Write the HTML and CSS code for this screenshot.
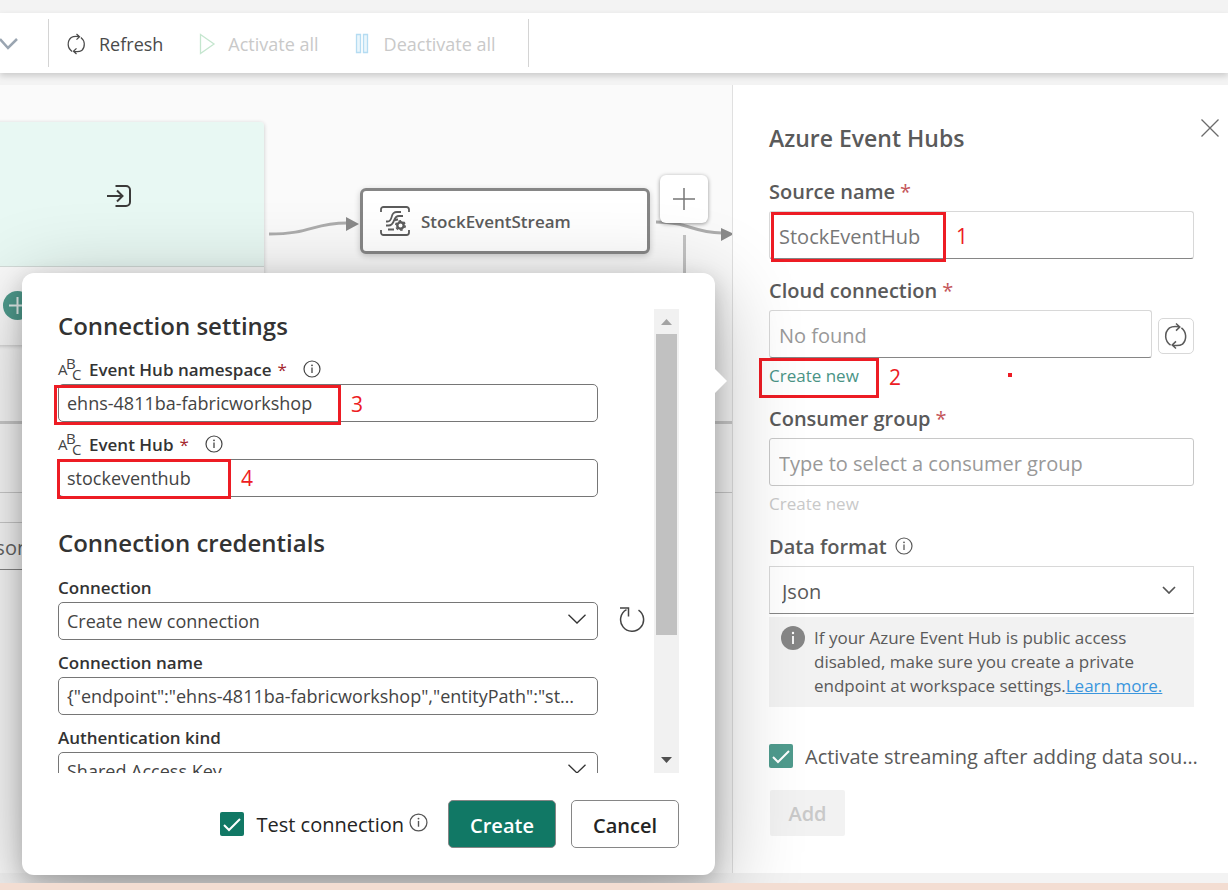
FILE: index.html
```html
<!DOCTYPE html>
<html lang="en">
<head>
<meta charset="utf-8">
<title>Azure Event Hubs</title>
<link rel="stylesheet" href="styles.css">
</head>
<body>
<svg class="defs" aria-hidden="true">
  <symbol id="sync" viewBox="0 0 24 24">
    <g fill="none" stroke="currentColor" stroke-width="1.4">
      <path d="M7 20.5A10 10 0 0 1 6 4.500Q9 2.500 15 3.500M12 0.500L15.500 3.700L12 7"/>
      <path d="M17 4.500A10 10 0 0 1 18 19.500Q15 21.500 9 20.500M12 17L8.500 20.300L12 23.500"/>
    </g>
  </symbol>
  <symbol id="info" viewBox="0 0 18 18">
    <circle cx="9" cy="9" r="8" fill="none" stroke="currentColor" stroke-width="1.2"/>
    <path d="M9 7.500V13" stroke="currentColor" stroke-width="1.3"/>
    <circle cx="9" cy="5.300" r="0.900" fill="currentColor"/>
  </symbol>
  <symbol id="thin-chevron" viewBox="0 0 18 10">
    <path d="M0.500 0.700L9 9L17.500 0.700" fill="none" stroke="currentColor" stroke-width="1.3"/>
  </symbol>
  <symbol id="check" viewBox="0 0 24 24">
    <path d="M4 13L9 18L20 7" fill="none" stroke="#fff" stroke-width="2"/>
  </symbol>
</svg>

<div class="app">
  <header class="toolbar">
    <button class="tool tool-menu" aria-label="More">
      <svg width="18" height="14" viewBox="0 0 18 14"><path d="M0 2L8 11L17 2" fill="none" stroke="#9aa5b1" stroke-width="2.500"/></svg>
    </button>
    <div class="tool-group">
      <button class="tool"><svg width="21" height="24"><use href="#sync"/></svg>Refresh</button>
      <button class="tool" disabled>
        <svg width="17" height="22" viewBox="0 0 17 22"><path d="M1.500 1.500L15 11L1.500 20.500Z" fill="none" stroke="#c5e6cf" stroke-width="1.300"/></svg>Activate all
      </button>
      <button class="tool" disabled>
        <svg width="17" height="22" viewBox="0 0 17 22"><path d="M1.500 1.500h4v18h-4zM8.500 1.500h4v18h-4z" fill="#eaf6fc" stroke="#b5dcf2" stroke-width="1.300"/></svg>Deactivate all
      </button>
    </div>
  </header>

  <main class="workspace">
    <section class="canvas">
      <div class="graph">
        <svg class="edges" width="732" height="336">
          <g fill="none" stroke="#adadad" stroke-width="3">
            <path d="M269 149C312 149 312 138 347 138"/>
            <path d="M656 137C690 137 690 147 722 148"/>
            <path d="M684.500 150V336" stroke="#c2c2c2"/>
          </g>
          <path d="M346 132L359 139L346 146ZM721 143L734 149L721 156Z" fill="#8a8a8a"/>
        </svg>
        <div class="source-node">
          <div class="source-top">
            <svg width="26" height="24" viewBox="0 0 26 24" fill="none" stroke="#3b3a39" stroke-width="2">
              <path d="M9.500 2H20a4 4 0 0 1 4 4V18a4 4 0 0 1-4 4H9.500M1 12H16M11 6.500L16.500 12L11 17.500"/>
            </svg>
          </div>
          <button class="add-source" aria-label="Add source">
            <svg width="17" height="17" viewBox="0 0 17 17"><path d="M8.500 0V17M0 8.500H17" stroke="#e4efed" stroke-width="2"/></svg>
          </button>
        </div>
        <div class="stream-node">
          <svg width="30" height="30" viewBox="0 0 30 30" fill="none" stroke="#5c5c5c" stroke-width="1.800">
            <path d="M1 6V3.500A2.500 2.500 0 0 1 3.500 1H26.500A2.500 2.500 0 0 1 29 3.500V6M1 24V26.500A2.500 2.500 0 0 0 3.500 29H26.500A2.500 2.500 0 0 0 29 26.500V24"/>
            <path d="M6 15.500H7.500C14 15.500 9 6 17 6H21M6 19.500H8.500C16 19.500 12 10 19 10H23M8 23.500H14M15 14.500C16 13.500 17 13.500 18 13.500"/>
            <circle cx="20.500" cy="19.500" r="3.200" stroke-width="2.400"/>
            <circle cx="20.500" cy="19.500" r="4.700" stroke-width="1.600" stroke-dasharray="2.500 2.420"/>
          </svg>
          StockEventStream
        </div>
        <button class="add-node" aria-label="Add node">
          <svg width="22" height="22" viewBox="0 0 22 22"><path d="M11 0V22M0 11H22" stroke="#777" stroke-width="1.500"/></svg>
        </button>
      </div>
      <div class="preview">
        <div class="preview-bar"></div>
        <button class="format-pick">Json</button>
      </div>
    </section>

    <aside class="panel">
      <div class="panel-head">
        <h2>Azure Event Hubs</h2>
        <button class="close" aria-label="Close">
          <svg width="18" height="18" viewBox="0 0 18 18"><path d="M0.500 0.500L17.500 17.500M17.500 0.500L0.500 17.500" stroke="#6b6b6b" stroke-width="1.300"/></svg>
        </button>
      </div>
      <form class="panel-form">
        <div class="group">
          <label for="source">Source name <b class="req">*</b></label>
          <div class="anchor">
            <input id="source" class="box" value="StockEventHub">
            <span class="mark mark-1"><i>1</i></span>
          </div>
        </div>
        <div class="group">
          <label for="cloud">Cloud connection <b class="req">*</b></label>
          <div class="with-button">
            <input id="cloud" class="box" placeholder="No found">
            <button type="button" class="sync-button" aria-label="Refresh connections"><svg width="26" height="28"><use href="#sync"/></svg></button>
          </div>
          <div class="anchor link-row">
            <a href="#">Create new</a>
            <span class="mark mark-2"><i>2</i></span>
            <span class="dot"></span>
          </div>
        </div>
        <div class="group">
          <label for="consumer">Consumer group <b class="req">*</b></label>
          <input id="consumer" class="box box-even" placeholder="Type to select a consumer group">
          <div class="link-row"><a class="off" href="#">Create new</a></div>
        </div>
        <div class="group">
          <label for="format">Data format <svg class="info" width="18" height="18"><use href="#info"/></svg></label>
          <div class="picker">
            <select id="format" class="box box-select"><option>Json</option></select>
            <svg width="14" height="8" viewBox="0 0 14 8"><path d="M1 1L7 7L13 1" fill="none" stroke="#555" stroke-width="1.700"/></svg>
          </div>
          <div class="note">
            <svg width="24" height="24" viewBox="0 0 24 24"><circle cx="12" cy="12" r="12" fill="#868686"/><path d="M12 10V18" stroke="#fff" stroke-width="1.800"/><circle cx="12" cy="7" r="1.200" fill="#fff"/></svg>
            <p>If your Azure Event Hub is public access disabled, make sure you create a private endpoint at workspace settings.<a href="#">Learn more.</a></p>
          </div>
        </div>
        <label class="tick tick-panel"><span class="tick-box"><input type="checkbox" checked><svg width="24" height="24"><use href="#check"/></svg></span><span class="tick-text">Activate streaming after adding data source</span></label>
        <button type="button" class="add" disabled>Add</button>
      </form>
    </aside>
  </main>

  <div class="dialog" role="dialog" aria-label="Connection settings">
    <div class="scroller">
      <div class="fields">
        <h3>Connection settings</h3>
        <div class="field">
          <label for="ns">
            <svg class="abc" width="25" height="24" viewBox="0 0 25 24" aria-hidden="true"><text x="0" y="18">A</text><text x="8" y="12">B</text><text x="14" y="23">C</text></svg>
            Event Hub namespace <b class="req">*</b><svg class="info" width="18" height="18"><use href="#info"/></svg>
          </label>
          <div class="anchor">
            <input id="ns" class="round" value="ehns-4811ba-fabricworkshop">
            <span class="mark mark-3"><i>3</i></span>
          </div>
        </div>
        <div class="field">
          <label for="hub">
            <svg class="abc" width="25" height="24" viewBox="0 0 25 24" aria-hidden="true"><text x="0" y="18">A</text><text x="8" y="12">B</text><text x="14" y="23">C</text></svg>
            Event Hub <b class="req">*</b><svg class="info" width="18" height="18"><use href="#info"/></svg>
          </label>
          <div class="anchor">
            <input id="hub" class="round" value="stockeventhub">
            <span class="mark mark-4"><i>4</i></span>
          </div>
        </div>
        <h3 class="second">Connection credentials</h3>
        <div class="field">
          <label for="conn">Connection</label>
          <div class="picker picker-thin">
            <select id="conn" class="round"><option>Create new connection</option></select>
            <svg width="18" height="10"><use href="#thin-chevron"/></svg>
            <button class="reload" aria-label="Reload connections">
              <svg width="26" height="26" viewBox="0 0 26 26" fill="none" stroke="#444" stroke-width="1.500"><path d="M7.500 3.700A11.500 11.500 0 1 0 19.500 4.200M1 2H9.500V10.500"/></svg>
            </button>
          </div>
        </div>
        <div class="field">
          <label for="cname">Connection name</label>
          <input id="cname" class="round round-long" value='{"endpoint":"ehns-4811ba-fabricworkshop","entityPath":"stockeventhub"}'>
        </div>
        <div class="field">
          <label for="auth">Authentication kind</label>
          <div class="picker picker-thin">
            <select id="auth" class="round"><option>Shared Access Key</option></select>
            <svg width="18" height="10"><use href="#thin-chevron"/></svg>
          </div>
        </div>
      </div>
      <div class="bar" aria-hidden="true">
        <svg width="11" height="6" viewBox="0 0 11 6"><path d="M0 6L5.500 0L11 6Z" fill="#a3a3a3"/></svg>
        <div class="thumb"></div>
        <svg width="11" height="6" viewBox="0 0 11 6"><path d="M0 0L5.500 6L11 0Z" fill="#505050"/></svg>
      </div>
    </div>
    <div class="actions">
      <label class="tick"><span class="tick-box"><input type="checkbox" checked><svg width="24" height="24"><use href="#check"/></svg></span>Test connection</label>
      <svg class="info" width="19" height="19"><use href="#info"/></svg>
      <button class="primary">Create</button>
      <button>Cancel</button>
    </div>
  </div>
</div>
<footer class="desk"></footer>
</body>
</html>
```

FILE: styles.css
```css
* { box-sizing: border-box; }

body {
  margin: 0;
  min-height: 100vh;
  display: flex;
  flex-direction: column;
  background: #f3f3f3;
  color: #333;
  font-family: "Open Sans", "Noto Sans", sans-serif;
  font-size: 18px;
}

button, input, select { font: inherit; color: inherit; margin: 0; }
button { border: 0; background: none; padding: 0; }
h2, h3, p { margin: 0; }
svg { flex: none; display: block; }
.defs { position: absolute; width: 0; height: 0; }

.app {
  position: relative;
  flex: 1;
  display: flex;
  flex-direction: column;
  padding: 13px 0 10px;
  overflow: hidden;
}

/* Toolbar */
.toolbar {
  display: flex;
  align-items: center;
  height: 60px;
  background: #fff;
  box-shadow: 0 3px 6px rgba(0, 0, 0, .16);
  margin-bottom: 12px;
}
.tool-menu { width: 48px; }
.tool-group {
  display: flex;
  align-items: center;
  gap: 36px;
  height: 48px;
  padding: 0 32px 0 17px;
  border: solid #d4d4d4;
  border-width: 0 1px;
}
.tool {
  display: flex;
  align-items: center;
  gap: 12px;
  padding-top: 2px;
  color: #4a4a4a;
}
.tool:disabled { color: #c9c9c9; }

/* Canvas */
.workspace { flex: 1; display: flex; position: relative; }
.canvas {
  flex: 1;
  min-width: 0;
  display: flex;
  flex-direction: column;
  background: #fafafa;
  overflow: hidden;
}
.graph { position: relative; height: 336px; }
.edges { position: absolute; left: 0; top: 0; }
.source-node {
  position: absolute;
  left: -26px;
  top: 37px;
  width: 290px;
  height: 223px;
  background: #fafafa;
  border-radius: 4px;
  box-shadow: 0 1px 4px rgba(0, 0, 0, .2);
}
.source-top {
  display: flex;
  align-items: center;
  justify-content: center;
  height: 145px;
  padding-top: 4px;
  background: #e8f8f3;
  border-bottom: 1px solid #d3dbd8;
  border-radius: 4px 4px 0 0;
}
.add-source {
  display: flex;
  align-items: center;
  justify-content: center;
  width: 29px;
  height: 29px;
  margin: 24px 0 0 29px;
  border-radius: 50%;
  background: #4f9b8d;
}
.stream-node {
  position: absolute;
  left: 360px;
  top: 103px;
  width: 290px;
  height: 66px;
  display: flex;
  align-items: center;
  gap: 11px;
  padding-left: 17px;
  border: 3px solid #868686;
  border-radius: 6px;
  background: #fff;
  box-shadow: 0 2px 6px rgba(0, 0, 0, .2);
  font-size: 17px;
  font-weight: 600;
  color: #5c5c5c;
}
.add-node {
  position: absolute;
  left: 660px;
  top: 90px;
  width: 48px;
  height: 48px;
  display: flex;
  align-items: center;
  justify-content: center;
  border-radius: 6px;
  background: #fff;
  box-shadow: 0 1px 4px rgba(0, 0, 0, .4);
}
.preview { flex: 1; border-top: 3px solid #ccc; }
.preview-bar { height: 69px; border-bottom: 1px solid #ccc; }
.format-pick {
  width: 200px;
  height: 48px;
  margin: 29px 0 0 -20px;
  padding: 2px 0 0 10px;
  text-align: left;
  border: solid #ccc;
  border-width: 1px 1px 1px 0;
  border-bottom-color: #868686;
  font-size: 20px;
  color: #666;
}

/* Side panel */
.panel {
  flex: 0 0 496px;
  min-width: 0;
  background: #fff;
  border-left: 1px solid #e0e0e0;
  padding: 34px 34px 0 36px;
  color: #5a5a5a;
}
.panel-head { display: flex; justify-content: space-between; margin-right: -25px; }
.panel-head h2 { font-size: 23px; line-height: 38px; font-weight: 600; }
.close { height: 18px; }
.panel-form { padding-top: 20px; }
.group { margin-bottom: 17px; }
.group > label {
  display: flex;
  align-items: center;
  gap: 5px;
  height: 28px;
  margin-bottom: 6px;
  font-size: 20px;
  font-weight: 600;
}
.req { color: #c4565a; font-weight: 400; }
.group .info { margin-left: 3px; }
.anchor { position: relative; }
.box {
  display: block;
  width: 100%;
  height: 48px;
  padding: 2px 9px 0;
  border: 1px solid #d8d8d8;
  border-bottom-color: #868686;
  border-radius: 3px;
  background: transparent;
  font-size: 20px;
  color: #777;
}
.box::placeholder { color: #999; opacity: 1; }
.box-even { border-color: #c8c8c8; }
.box-select { appearance: none; border-radius: 0; padding: 2px 12px 0; color: #5a5a5a; }
.with-button { display: flex; align-items: center; gap: 6px; }
.sync-button {
  flex: none;
  width: 36px;
  height: 36px;
  display: flex;
  align-items: center;
  justify-content: center;
  margin-top: 4px;
  border: 1px solid #d8d8d8;
  border-radius: 5px;
}
.link-row { margin-top: 6px; line-height: 23px; font-size: 17px; }
.link-row a { color: #4a9486; text-decoration: none; }
.link-row a.off { color: #c9c9c9; }
.picker { display: grid; align-items: center; position: relative; }
.picker > select, .picker > svg { grid-area: 1 / 1; }
.picker > svg { justify-self: end; margin-right: 18px; pointer-events: none; }
.note {
  display: flex;
  gap: 9px;
  margin-top: 3px;
  padding: 9px 12px;
  background: rgba(0, 0, 0, .05);
  font-size: 17px;
  line-height: 24px;
}
.note a { color: #3b96dd; }
.tick { display: flex; align-items: center; gap: 12px; white-space: nowrap; }
.tick-box { display: grid; }
.tick-box > * { grid-area: 1 / 1; }
.tick input {
  appearance: none;
  width: 24px;
  height: 24px;
  border-radius: 2px;
  background: #117865;
}
.tick svg { position: relative; pointer-events: none; }
.tick-panel { height: 24px; margin: 37px -4px 22px 0; font-size: 20px; }
.tick-panel input { background: #4f9b8d; }
.tick-text { min-width: 0; overflow: hidden; text-overflow: ellipsis; }
.add {
  width: 75px;
  height: 46px;
  margin-left: 1px;
  border-radius: 2px;
  background: rgba(0, 0, 0, .05);
  font-size: 20px;
  font-weight: 600;
  color: #c9c9c9;
}

/* Connection dialog */
.dialog {
  position: absolute;
  left: 22px;
  top: 273px;
  width: 693px;
  padding: 36px 36px 27px;
  border-radius: 12px;
  background: #fff;
  box-shadow: 0 20px 86px rgba(0, 0, 0, .3), 0 7px 22px rgba(0, 0, 0, .2);
}
.dialog::after {
  content: "";
  position: absolute;
  left: 100%;
  top: 96px;
  border: 12px solid transparent;
  border-left-color: #fff;
  border-right-width: 0;
}
.scroller { display: flex; justify-content: space-between; height: 464px; overflow-x: visible; overflow-y: clip; }
.fields { width: 540px; }
.fields h3 { font-size: 24px; line-height: 34px; font-weight: 600; margin-bottom: 13px; }
.fields .second { margin: 29px 0 14px; }
.field { margin-bottom: 9px; }
.field label {
  display: flex;
  align-items: center;
  gap: 6px;
  height: 28px;
  padding-bottom: 2px;
  font-size: 17px;
  font-weight: 600;
}
.abc { font-size: 15px; font-weight: 400; fill: #444; overflow: visible; }
.field .req { color: #a4262c; }
.field .info { margin-left: 10px; color: #444; }
.round {
  display: block;
  width: 100%;
  height: 38px;
  padding: 0 8px;
  border: 1px solid #767676;
  border-radius: 5px;
  background: #fff;
  color: #444;
  text-overflow: ellipsis;
  appearance: none;
}
.round-long { padding-right: 16px; }
.picker-thin > svg { margin-right: 12px; margin-bottom: 4px; }
.reload { position: absolute; left: 100%; margin: 0 0 5px 21px; }
.bar {
  display: flex;
  flex-direction: column;
  align-items: center;
  width: 25px;
  padding: 10px 0;
  background: #f1f1f1;
}
.thumb { width: 21px; height: 301px; margin: 9px 0 auto; background: #c1c1c1; }
.actions {
  display: flex;
  align-items: center;
  justify-content: flex-end;
  margin-top: 27px;
}
.actions .tick { font-size: 20px; color: #242424; }
.actions .info { margin: 0 20px 4px 5px; color: #555; }
.actions button {
  width: 108px;
  height: 48px;
  padding-top: 2px;
  border: 1px solid #868686;
  border-radius: 5px;
  font-weight: 600;
  font-size: 20px;
  color: #242424;
}
.actions .primary { margin-right: 15px; background: #117865; color: #fff; }

/* Numbered call-outs */
.mark {
  position: absolute;
  border: 3px solid #ed1c24;
  pointer-events: none;
}
.mark i {
  position: absolute;
  left: 100%;
  top: 50%;
  margin: -15px 0 0 13px;
  line-height: 28px;
  font-size: 21px;
  font-style: normal;
  font-weight: 500;
  color: #ed1c24;
}
.mark-1 { left: 2px; top: 1px; width: 175px; height: 50px; }
.mark-2 { left: -10px; top: -6px; width: 120px; height: 40px; }
.mark-3 { left: -4px; top: 1px; width: 287px; height: 40px; }
.mark-4 { left: -1px; top: 0; width: 174px; height: 40px; }
.dot { position: absolute; left: 239px; top: 9px; width: 4px; height: 4px; background: #ed1c24; }

.desk { height: 7px; background: #f3ddd2; }
```
